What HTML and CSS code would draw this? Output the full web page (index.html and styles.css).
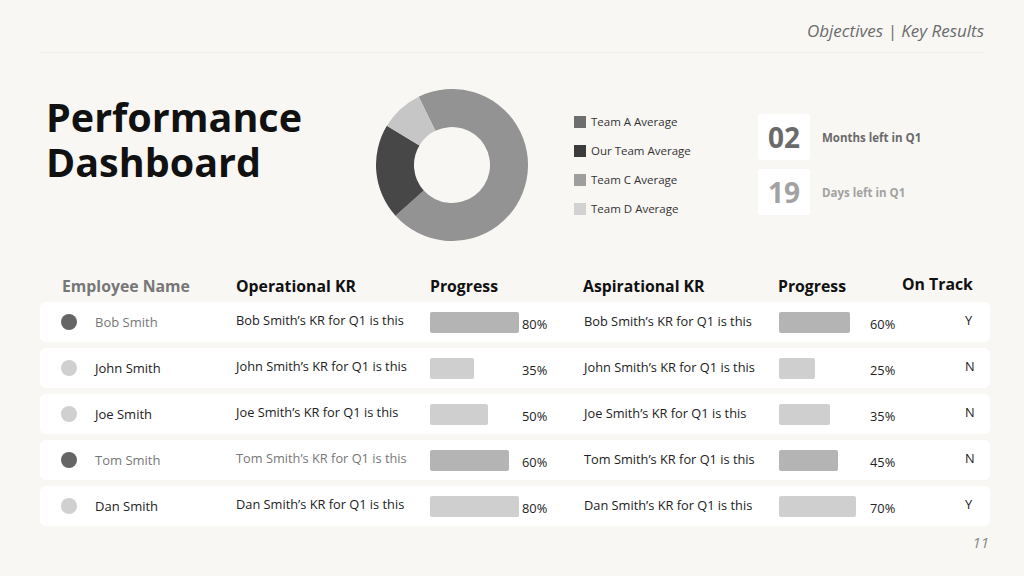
FILE: index.html
```html
<!DOCTYPE html>
<html lang="en">
<head>
<meta charset="utf-8">
<title>Performance Dashboard</title>
<link rel="stylesheet" href="styles.css">
</head>
<body>
<div class="slide">
  <header class="topbar"><span>Objectives | Key Results</span></header>

  <section class="hero">
    <h1 class="title"><span class="tline">Performance</span><span class="tline">Dashboard</span></h1>
    <svg class="donut" width="152" height="152" viewBox="0 0 152 152">
      <path fill="#939393" d="M 42.68 7.69 A 76 76 0 1 1 19.52 126.85 L 47.76 101.43 A 38 38 0 1 0 59.34 41.85 Z"/>
      <path fill="#474747" d="M 19.52 126.85 A 76 76 0 0 1 10.85 36.86 L 43.43 56.43 A 38 38 0 0 0 47.76 101.43 Z"/>
      <path fill="#c6c6c6" d="M 10.85 36.86 A 76 76 0 0 1 42.68 7.69 L 59.34 41.85 A 38 38 0 0 0 43.43 56.43 Z"/>
    </svg>
    <ul class="legend">
      <li><span class="sw sw-a"></span>Team A Average</li>
      <li><span class="sw sw-our"></span>Our Team Average</li>
      <li><span class="sw sw-c"></span>Team C Average</li>
      <li><span class="sw sw-d"></span>Team D Average</li>
    </ul>
    <div class="stats">
      <div class="stat stat-dark"><div class="stat-box">02</div><span>Months left in Q1</span></div>
      <div class="stat stat-light"><div class="stat-box">19</div><span>Days left in Q1</span></div>
    </div>
  </section>

  <section class="table">
    <div class="thead">
      <div class="th th-name">Employee Name</div>
      <div class="th">Operational KR</div>
      <div class="th">Progress</div>
      <div class="th">Aspirational KR</div>
      <div class="th">Progress</div>
      <div class="th th-track">On Track</div>
    </div>

    <div class="row muted">
      <div class="dot dark"></div><div class="name">Bob Smith</div>
      <div class="kr">Bob Smith’s KR for Q1 is this</div>
      <div class="barcell"><div class="bar mid" style="width:89px"></div></div>
      <div class="pct">80%</div>
      <div class="kr kr2">Bob Smith’s KR for Q1 is this</div>
      <div class="barcell"><div class="bar mid" style="width:71px"></div></div>
      <div class="pct">60%</div>
      <div class="track">Y</div>
    </div>

    <div class="row">
      <div class="dot light"></div><div class="name">John Smith</div>
      <div class="kr">John Smith’s KR for Q1 is this</div>
      <div class="barcell"><div class="bar pale" style="width:44px"></div></div>
      <div class="pct">35%</div>
      <div class="kr kr2">John Smith’s KR for Q1 is this</div>
      <div class="barcell"><div class="bar pale" style="width:36px"></div></div>
      <div class="pct">25%</div>
      <div class="track">N</div>
    </div>

    <div class="row">
      <div class="dot light"></div><div class="name">Joe Smith</div>
      <div class="kr">Joe Smith’s KR for Q1 is this</div>
      <div class="barcell"><div class="bar pale" style="width:58px"></div></div>
      <div class="pct">50%</div>
      <div class="kr kr2">Joe Smith’s KR for Q1 is this</div>
      <div class="barcell"><div class="bar pale" style="width:51px"></div></div>
      <div class="pct">35%</div>
      <div class="track">N</div>
    </div>

    <div class="row muted">
      <div class="dot dark"></div><div class="name">Tom Smith</div>
      <div class="kr kr-muted">Tom Smith’s KR for Q1 is this</div>
      <div class="barcell"><div class="bar mid" style="width:79px"></div></div>
      <div class="pct">60%</div>
      <div class="kr kr2">Tom Smith’s KR for Q1 is this</div>
      <div class="barcell"><div class="bar mid" style="width:59px"></div></div>
      <div class="pct">45%</div>
      <div class="track">N</div>
    </div>

    <div class="row">
      <div class="dot light"></div><div class="name">Dan Smith</div>
      <div class="kr">Dan Smith’s KR for Q1 is this</div>
      <div class="barcell"><div class="bar pale" style="width:89px"></div></div>
      <div class="pct">80%</div>
      <div class="kr kr2">Dan Smith’s KR for Q1 is this</div>
      <div class="barcell"><div class="bar pale" style="width:77px"></div></div>
      <div class="pct">70%</div>
      <div class="track">Y</div>
    </div>
  </section>

  <footer class="pagenum">11</footer>
</div>
</body>
</html>
```

FILE: styles.css
```css
* { box-sizing: border-box; }

html, body {
  margin: 0;
  padding: 0;
}

body {
  width: 1024px;
  height: 576px;
  overflow: hidden;
  background: #f8f7f4;
  font-family: "Open Sans", "Liberation Sans", sans-serif;
  color: #222;
}

.slide {
  display: flex;
  flex-direction: column;
  padding: 0 34px 0 40px;
  height: 576px;
}

/* top bar */
.topbar {
  height: 53px;
  padding-top: 19px;
  margin-right: 6px;
  display: flex;
  justify-content: flex-end;
  border-bottom: 1px solid #eeede8;
}
.topbar span {
  font-style: italic;
  font-size: 17px;
  line-height: 24px;
  color: #6c6c6c;
}

/* hero */
.hero {
  display: flex;
  height: 219px;
}
.title {
  margin: 42px 0 0 0;
  padding-left: 6px;
  width: 336px;
  font-size: 39.5px;
  line-height: 45px;
  font-weight: 700;
  color: #111;
  display: flex;
  flex-direction: column;
}
.tline {
  display: block;
  height: 45px;
}
.donut {
  flex: none;
  margin-top: 36px;
}
.legend {
  list-style: none;
  margin: 54px 0 0 46px;
  padding: 0;
  width: 184px;
}
.legend li {
  display: flex;
  align-items: center;
  height: 29px;
  font-size: 11.5px;
  color: #333;
}
.sw {
  width: 12px;
  height: 12px;
  margin-right: 5px;
  flex: none;
}
.sw-a { background: #6e6e6e; }
.sw-our { background: #3c3c3c; }
.sw-c { background: #9e9e9e; }
.sw-d { background: #d2d2d2; }

.stats {
  margin-top: 61px;
  display: flex;
  flex-direction: column;
  gap: 9px;
}
.stat {
  display: flex;
  align-items: center;
  gap: 12px;
  font-size: 11.5px;
  font-weight: 700;
}
.stat-box {
  width: 52px;
  height: 46px;
  background: #fff;
  border-radius: 3px;
  display: flex;
  align-items: center;
  justify-content: center;
  font-size: 28px;
  font-weight: 700;
}
.stat-dark { color: #6a6a6a; }
.stat-light { color: #a2a2a2; }

/* table */
.table {
  display: flex;
  flex-direction: column;
  gap: 6px;
}
.thead,
.row {
  display: grid;
  grid-template-columns: 55px 141px 194px 92px 62px 195px 91px 70px 1fr;
  align-items: center;
}
.thead {
  height: 30px;
  margin-bottom: -6px;
  grid-template-columns: 196px 194px 153px 195px 124px 1fr;
}
.th {
  font-size: 15.8px;
  font-weight: 700;
  color: #111;
  padding-bottom: 2px;
}
.th-name {
  padding-left: 22px;
  color: #777;
}
.th-track {
  padding-bottom: 6px;
}

.row {
  height: 40px;
  background: #fff;
  border-radius: 6px;
  font-size: 12.8px;
  color: #222;
}
.dot {
  width: 16px;
  height: 16px;
  border-radius: 50%;
  margin-left: 21px;
}
.dot.dark { background: #656565; }
.dot.light { background: #d0d0d0; }
.name { color: #222; font-size: 13px; }
.muted .name { color: #777; }
.kr { padding-bottom: 5px; }
.kr-muted { color: #777; }
.kr2 { padding-bottom: 3px; }
.barcell { display: flex; align-items: center; }
.bar {
  height: 21px;
  border-radius: 2px;
}
.bar.mid { background: #b4b4b4; }
.bar.pale { background: #cfcfcf; }
.pct { padding-top: 4px; }
.track {
  padding-left: 25px;
  padding-bottom: 5px;
}

.pagenum {
  margin-top: 6px;
  padding-right: 1px;
  text-align: right;
  font-style: italic;
  font-size: 15px;
  color: #888;
}
```
